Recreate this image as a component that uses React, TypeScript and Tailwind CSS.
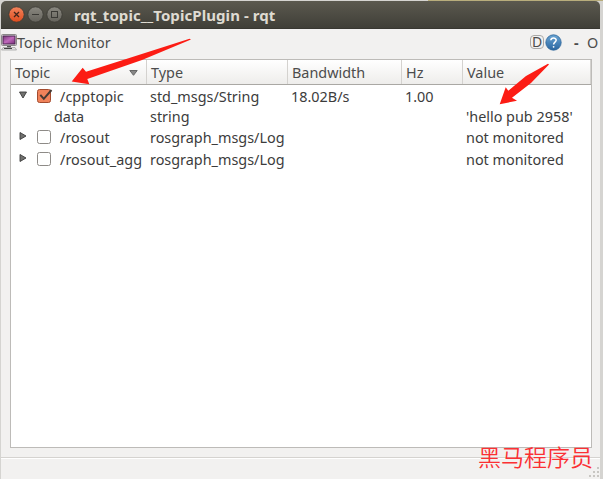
import React from "react";

type Row = {
  topic: string;
  type: string;
  bandwidth?: string;
  hz?: string;
  value?: string;
  state?: "open" | "closed";
  checked?: boolean;
  height: string;
};

const rows: Row[] = [
  { topic: "/cpptopic", type: "std_msgs/String", bandwidth: "18.02B/s", hz: "1.00", state: "open", checked: true, height: "h-[21px]" },
  { topic: "data", type: "string", value: "'hello pub 2958'", height: "h-[20px]" },
  { topic: "/rosout", type: "rosgraph_msgs/Log", value: "not monitored", state: "closed", height: "h-[22px]" },
  { topic: "/rosout_agg", type: "rosgraph_msgs/Log", value: "not monitored", state: "closed", height: "h-[22px]" },
];

const columns = "grid grid-cols-[136px_141px_114px_61px_128px]";

function WindowButton({ kind }: { kind: "close" | "min" | "max" }) {
  const close = kind === "close";
  return (
    <svg width="17" height="17" viewBox="0 0 17 17" fill="none">
      <defs>
        <linearGradient id={`button-${kind}`} x2="0" y2="1">
          <stop stopColor={close ? "#f4855d" : "#8b8981"} />
          <stop offset="1" stopColor={close ? "#de4c1e" : "#64625b"} />
        </linearGradient>
      </defs>
      <circle cx="8.5" cy="8.5" r="7.7" fill={`url(#button-${kind})`} stroke="#3b3a34" strokeWidth=".8" />
      {kind === "close" && <path d="M6 6l5 5M11 6l-5 5" stroke="#43261b" strokeWidth="1.3" />}
      {kind === "min" && <path d="M5 8.5h7" stroke="#3a3935" />}
      {kind === "max" && <rect x="5.5" y="5.5" width="6" height="6" stroke="#3a3935" />}
    </svg>
  );
}

function MonitorIcon() {
  return (
    <svg width="16" height="17" viewBox="0 0 16 17">
      <defs>
        <linearGradient id="screen" x2="1" y2="1">
          <stop stopColor="#783a78" />
          <stop offset=".5" stopColor="#c069bc" />
          <stop offset="1" stopColor="#762c77" />
        </linearGradient>
      </defs>
      <rect x=".5" y=".5" width="15" height="11" rx="1" fill="#e5e4e3" stroke="#8a8888" />
      <rect x="2" y="2" width="12" height="8" fill="url(#screen)" stroke="#4b2450" />
      <path d="M6 12h4v2H6z" fill="#555" />
      <path d="M2 13.5h12l1.5 2.5H.5z" fill="#e2e2e2" stroke="#999" strokeWidth=".7" />
      <path d="M3 14.5h8" stroke="#444" />
    </svg>
  );
}

function HelpIcon() {
  return (
    <svg width="17" height="17" viewBox="0 0 17 17">
      <defs>
        <linearGradient id="help" x2="0" y2="1">
          <stop stopColor="#6aa5d4" />
          <stop offset="1" stopColor="#2a66a0" />
        </linearGradient>
      </defs>
      <circle cx="8.5" cy="8.5" r="7.7" fill="url(#help)" stroke="#2f6699" strokeWidth=".8" />
      <path d="M5.8 6.2C6 3.4 11.2 3.3 11.2 6.1c0 2-2.6 2-2.6 4.4" fill="none" stroke="#fff" strokeWidth="1.5" />
      <circle cx="8.6" cy="12.8" r=".9" fill="#fff" />
    </svg>
  );
}

function Expander({ open }: { open: boolean }) {
  return (
    <svg width="8" height="8" viewBox="0 0 8 8" className="block">
      <path d={open ? "M.5 1h7L4 7z" : "M1 .5v7L7 4z"} fill="#71716f" stroke="#3c3c3c" strokeWidth=".9" />
    </svg>
  );
}

function Checkbox({ checked }: { checked?: boolean }) {
  return (
    <svg width="17" height="16" viewBox="0 0 17 16" className="block">
      <rect x=".5" y="1.5" width="13" height="13" rx="2" fill={checked ? "#f0825a" : "#fff"} stroke={checked ? "#a34b2e" : "#8e8b87"} />
      {checked && <path d="M3.3 6.8l3.5 4L14.5 2" fill="none" stroke="#453a34" strokeWidth="2" />}
    </svg>
  );
}

export default function App() {
  return (
    <div className="relative flex h-[479px] w-[603px] flex-col overflow-hidden bg-[#d5d4d1] pl-px pr-[3px] pt-px font-['Noto_Sans','Open_Sans',sans-serif] text-[14.4px] text-[#3c3c3c]">
      <div className="absolute right-0 top-0 h-px w-[175px] bg-[#b8ad7c]" />
      <header className="flex h-7 shrink-0 items-center rounded-t-[5px] border-b border-[#383731] bg-linear-to-b from-[#5b594f] to-[#403f38] pl-[7px]">
        <div className="flex gap-[2px]">
          <WindowButton kind="close" />
          <WindowButton kind="min" />
          <WindowButton kind="max" />
        </div>
        <h1 className="ml-[11px] whitespace-nowrap pt-px text-[15px] font-bold leading-5 tracking-[0.07px] text-[#dfdbd2]">rqt_topic__TopicPlugin - rqt</h1>
      </header>
      <main className="flex flex-1 flex-col bg-[#f2f1f0]">
        <div className="flex h-[30px] shrink-0 items-center pb-[3px] text-[#4c4c4c]">
          <MonitorIcon />
          <span className="tracking-[0.05px]">Topic Monitor</span>
          <div className="ml-auto flex items-center">
            <span className="flex h-[14px] w-[14px] items-center justify-center rounded-[4px] border border-[#aaa9a7] text-[14px] leading-none">D</span>
            <span className="ml-px"><HelpIcon /></span>
            <span className="ml-[12px] w-[7px] font-bold">-</span>
            <span className="ml-[6px] w-[13px]">O</span>
          </div>
        </div>
        <section className="ml-[9px] flex h-[389px] w-[582px] flex-col border border-[#bdbbb8] bg-white">
          <div className={`${columns} h-[25px] shrink-0 border-b border-[#aaa8a4] bg-linear-to-b from-white to-[#eeedeb] text-[#4c4c4c] *:flex *:items-center *:border-r *:border-[#d4d2cf] *:pl-1 *:pt-0.5`}>
            <div className="justify-between pr-2">
              <span>Topic</span>
              <svg width="9" height="6" viewBox="0 0 9 6"><path d="M.8.5h7.4L4.5 5.3z" fill="#888" stroke="#666" /></svg>
            </div>
            <div>Type</div>
            <div>Bandwidth</div>
            <div>Hz</div>
            <div>Value</div>
          </div>
          <div>
            {rows.map((row) => (
              <div key={row.topic} className={`${columns} ${row.height} items-center whitespace-nowrap leading-5`}>
                <div className="flex items-center">
                  {row.state ? (
                    <>
                      <span className="ml-[8px] pb-[2px]"><Expander open={row.state === "open"} /></span>
                      <span className="ml-[10px]"><Checkbox checked={row.checked} /></span>
                      <span className="-mb-0.5 ml-[6px] tracking-[0.05px]">{row.topic}</span>
                    </>
                  ) : (
                    <span className="-mb-0.5 ml-[43px]">{row.topic}</span>
                  )}
                </div>
                <span className="-mb-0.5 pl-[3px]">{row.type}</span>
                <span className="-mb-0.5 pl-[3px]">{row.bandwidth}</span>
                <span className="-mb-0.5 pl-[3px]">{row.hz}</span>
                <span className="-mb-0.5 pl-[3px]">{row.value}</span>
              </div>
            ))}
          </div>
        </section>
        <footer className="mt-[9px] flex-1 border-t border-[#d5d3d0] shadow-[inset_0_1px_0_#fff]" />
      </main>
      <svg className="absolute left-0 top-0" width="603" height="479" fill="#fc1c14">
        <path d="M189.5 38.7l1.5.8-49 20.5-54.7 19 2 5.3-17.6-2.8 11-13.8 3.3 4L123 60z" />
        <path d="M548 63.8l1 .8L531 83l-19 14.7 5 3-17.3 3.6 6-17 2.6 3.4L526 76z" />
        <path fill="#c8c6c2" d="M597 467h2v2h-2zM593 471h2v2h-2zM597 471h2v2h-2zM589 475h2v2h-2zM593 475h2v2h-2zM597 475h2v2h-2z" />
      </svg>
      <div className="absolute left-[478px] top-[441px] whitespace-nowrap font-['Noto_Sans_CJK_SC',sans-serif] text-[23px] font-[350] leading-[31px] text-[#fb3033]">黑马程序员</div>
    </div>
  );
}
